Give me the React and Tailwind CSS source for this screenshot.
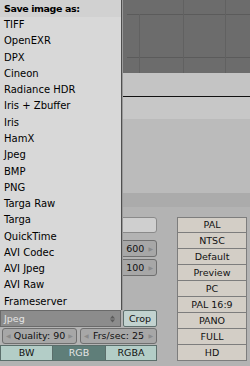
const formats = [
  "TIFF",
  "OpenEXR",
  "DPX",
  "Cineon",
  "Radiance HDR",
  "Iris + Zbuffer",
  "Iris",
  "HamX",
  "Jpeg",
  "BMP",
  "PNG",
  "Targa Raw",
  "Targa",
  "QuickTime",
  "AVI Codec",
  "AVI Jpeg",
  "AVI Raw",
  "Frameserver",
];

const presets = ["PAL", "NTSC", "Default", "Preview", "PC", "PAL 16:9", "PANO", "FULL", "HD"];

const font = "font-['DejaVu_Sans',sans-serif]";

function NumField({ label, className = "" }) {
  return (
    <div
      className={`flex items-center justify-between px-[3px] rounded-[3px] border border-[#6f6f6f] bg-[#a7a7a7] text-[#111] ${className}`}
    >
      <span className="text-[6px] text-[#8a8a8a]">◀</span>
      <span>{label}</span>
      <span className="text-[6px] text-[#8a8a8a]">▶</span>
    </div>
  );
}

export default function App() {
  return (
    <div className={`relative w-[250px] h-[366px] overflow-hidden bg-[#b3b3b3] text-[9.5px] leading-none ${font}`}>
      {/* viewport */}
      <div className="h-[73px] bg-[#6c6c6c]">
        <svg width="250" height="73" className="block">
          <line x1="127" y1="14.5" x2="250" y2="14.5" stroke="#5b5b5b" />
          <line x1="127" y1="57.5" x2="250" y2="57.5" stroke="#5b5b5b" />
          <line x1="139.5" y1="14" x2="139.5" y2="73" stroke="#616161" />
          <line x1="183.5" y1="0" x2="183.5" y2="73" stroke="#616161" />
          <line x1="225.5" y1="0" x2="225.5" y2="73" stroke="#616161" />
        </svg>
      </div>
      <div className="h-[23px] bg-[#c4c4c4]" />
      <div className="h-px bg-[#111]" />

      {/* buttons window */}
      <div className="h-[22px] bg-[#c7c7c7]" />
      <div className="h-[74px] bg-[#bbbbbb]" />
      <div className="h-[14px] bg-[#ababab]" />

      <div className="flex gap-[20px] pt-[10px]">
        <div className="flex flex-col w-[157px]">
          <div className="h-[16px] ml-[2px] rounded-[3px] border border-[#8a8a8a] bg-[#cfcfcf]" />
          <div className="mt-[7px] h-[17px] ml-[80px] flex items-center justify-end pr-[3px] gap-[4px] rounded-[3px] border border-[#6f6f6f] bg-[#a7a7a7] text-[#111]">
            <span>SizeX: 600</span>
            <span className="text-[6px] text-[#8a8a8a]">▶</span>
          </div>
          <div className="mt-[2px] h-[17px] ml-[80px] flex items-center justify-end pr-[3px] gap-[4px] rounded-[3px] border border-[#6f6f6f] bg-[#a7a7a7] text-[#111]">
            <span>SizeY: 100</span>
            <span className="text-[6px] text-[#8a8a8a]">▶</span>
          </div>

          <div className="mt-[34px] flex h-[17px] gap-[2px]">
            <div className="w-[121px] flex items-center justify-between pl-[3px] pr-[5px] border border-[#6a6a6a] bg-[#8c8c8c] text-[#e4e4e4]">
              <span>Jpeg</span>
              <svg width="5" height="8" viewBox="0 0 5 8">
                <path d="M0 3.5 L2.5 0.5 L5 3.5 Z M0 4.5 L2.5 7.5 L5 4.5 Z" fill="#5c5c5c" />
              </svg>
            </div>
            <div className="flex-1 flex items-center justify-center rounded-[2px] border border-[#5f6f6d] bg-[#c2d2cf] text-[#111]">
              Crop
            </div>
          </div>

          <div className="mt-[1px] flex h-[16px] gap-[3px] pl-[2px]">
            <NumField label="Quality: 90" className="w-[75px]" />
            <NumField label="Frs/sec: 25" className="flex-1" />
          </div>

          <div className="mt-[1px] flex h-[16px] border border-[#5b6e6b]">
            <div className="w-[52px] flex items-center justify-center bg-[#b3cdc7] text-[#111] border-r border-[#5b6e6b]">
              BW
            </div>
            <div className="w-[53px] flex items-center justify-center bg-[#5f7e79] text-[#e6e6e6] border-r border-[#5b6e6b]">
              RGB
            </div>
            <div className="flex-1 flex items-center justify-center bg-[#b3cdc7] text-[#111]">RGBA</div>
          </div>
        </div>

        <div className="flex flex-col w-[70px]">
          {presets.map((p) => (
            <div
              key={p}
              className="h-[16px] flex items-center justify-center border border-[#7d7d7d] bg-[#d3cec6] text-[#111] -mt-px first:mt-0 [&:not(:first-child)]:h-[17px]"
            >
              {p}
            </div>
          ))}
        </div>
      </div>

      {/* popup menu */}
      <div className="absolute top-0 left-0 w-[122px] h-[310px] bg-[#d8d8d8] border-r border-[#4f4f4f] shadow-[1px_0_0_#9a9a9a] text-[10px]">
        <div className="h-[17px] flex items-center pl-[4px] bg-[#d1d1d1] font-bold tracking-[-0.4px] text-[9.5px] text-black">
          Save image as:
        </div>
        {formats.map((f) => (
          <div key={f} className="h-[16.27px] flex items-center pl-[4px] text-black">
            {f}
          </div>
        ))}
      </div>
    </div>
  );
}
